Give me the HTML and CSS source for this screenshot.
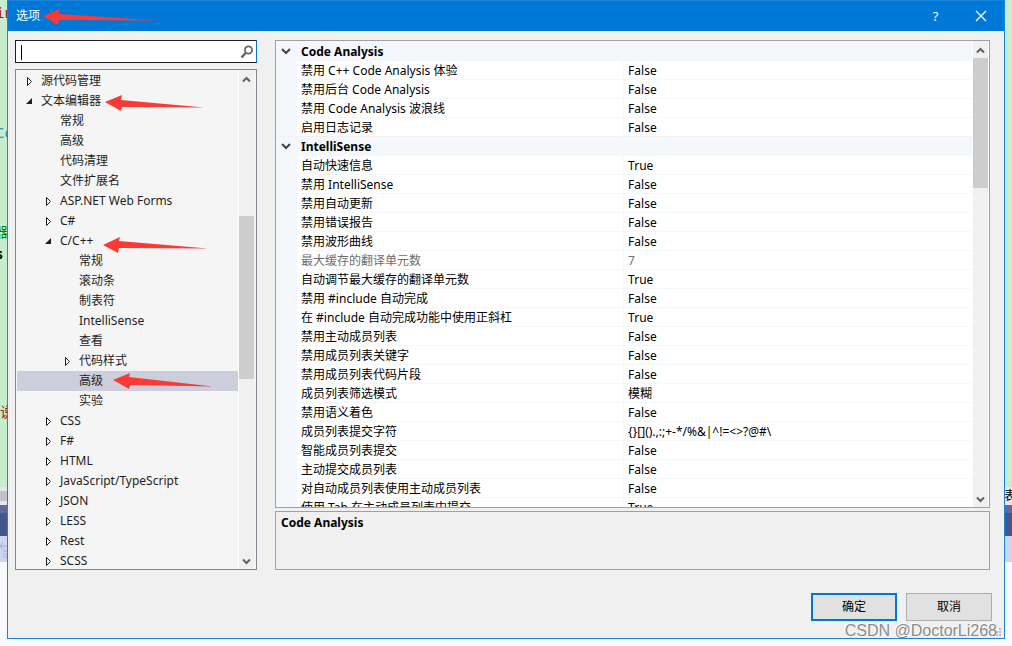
FILE: index.html
```html
<!DOCTYPE html>
<html lang="zh-CN">
<head>
<meta charset="utf-8">
<title>选项</title>
<link rel="stylesheet" href="styles.css">
</head>
<body>
<div class="backdrop" aria-hidden="true">
  <div class="editor">
    <span class="code code-red code-l1">in</span>
    <span class="code code-teal code-l2">Co</span>
    <span class="code code-green code-l3">器</span>
    <span class="code code-black code-l4">s</span>
    <span class="code code-red code-l5">说</span>
  </div>
  <div class="hscroll"><span class="hthumb"></span><span>表</span></div>
  <div class="band-top"></div>
  <div class="band"></div>
  <div class="toolbar">
    <svg width="8" height="26" viewBox="0 0 8 26"><path d="M0 10h7M3 7L0 10l3 3M3 15h5M3 18h5M3 21h5" fill="none" stroke="#a5acc5"/></svg>
  </div>
</div>

<main class="dialog" role="dialog" aria-labelledby="title">
  <header class="titlebar">
    <h1 id="title">选项</h1>
    <button class="caption" type="button" aria-label="帮助">?</button>
    <button class="caption" type="button" aria-label="关闭"><svg width="12" height="12" viewBox="0 0 12 12"><path d="M1 1l10 10M11 1L1 11" fill="none" stroke="#fff" stroke-width="1.2"/></svg></button>
  </header>

  <div class="content">
    <nav class="side">
      <div class="search">
        <input type="text" aria-label="搜索选项">
        <span class="caret"></span>
        <svg width="14" height="14" viewBox="0 0 14 14"><circle cx="8.5" cy="5" r="3.6" fill="none" stroke="#666" stroke-width="1.8"/><path d="M6 7.5L1.5 12.5" stroke="#666" stroke-width="2.6"/></svg>
      </div>
      <div class="tree">
        <ul class="nodes" id="nodes" role="tree"></ul>
        <div class="scrollbar">
          <svg class="arrow" width="9" height="7" viewBox="0 0 9 7"><path d="M1 5.5L4.5 2L8 5.5"/></svg>
          <div class="track tree-track"><div class="thumb tree-thumb"></div></div>
          <svg class="arrow" width="9" height="7" viewBox="0 0 9 7"><path d="M1 1.500L4.500 5L8 1.500"/></svg>
        </div>
      </div>
    </nav>

    <section class="detail">
      <div class="grid">
        <div class="viewport">
          <table>
            <colgroup><col class="c-gutter"><col class="c-name"><col class="c-value"></colgroup>
            <tbody id="props"></tbody>
          </table>
        </div>
        <div class="scrollbar">
          <svg class="arrow" width="9" height="7" viewBox="0 0 9 7"><path d="M1 5.500L4.500 2L8 5.500"/></svg>
          <div class="track"><div class="thumb grid-thumb"></div></div>
          <svg class="arrow" width="9" height="7" viewBox="0 0 9 7"><path d="M1 1.500L4.500 5L8 1.500"/></svg>
        </div>
      </div>
      <div class="description">Code Analysis</div>
    </section>
  </div>

  <footer class="actions">
    <button class="btn primary" type="button">确定</button>
    <button class="btn" type="button">取消</button>
  </footer>
  <svg class="grip" width="8" height="8" viewBox="0 0 8 8"><path d="M6 0h2v2H6zM3 3h2v2H3zM6 3h2v2H6zM0 6h2v2H0zM3 6h2v2H3zM6 6h2v2H6z" fill="#bbb"/></svg>
</main>

<svg class="marks" width="260" height="400" viewBox="0 0 260 400" aria-hidden="true">
  <g fill="#fb3a36">
    <path d="M43 16L60 9L59 14L157 20.500L59 20L58 25Z"/>
    <path d="M105 102L122 95L121 100L204 107.500L122 107L121 111Z"/>
    <path d="M103 245L120 237L119 241L208 248.500L119 248L118 253Z"/>
    <path d="M113 380L130 373L129 377L213 386.500L130 385L129 389Z"/>
  </g>
</svg>
<div class="watermark">CSDN @DoctorLi268</div>
<script src="options.js"></script>
</body>
</html>
```
FILE: styles.css
```css
* { box-sizing: border-box; }
body {
  margin: 0;
  height: 100vh;
  display: flex;
  position: relative;
  overflow: hidden;
  padding: 0 7px 7px;
  background: #f8f9ff;
  color: #1e1e1e;
  font: 12px/18px "Noto Sans", "Noto Sans CJK SC", sans-serif;
}
button, input { font: inherit; color: inherit; }

.backdrop { position: absolute; inset: 0; }
.editor { height: 487px; background: #c7edcc; position: relative; overflow: hidden; }
.code { position: absolute; left: 0; font: 14px/18px "DejaVu Sans Mono", "Noto Sans CJK SC", monospace; }
.code-l1 { top: 4px; left: -4px; }
.code-l2 { top: 124px; left: -4px; }
.code-l3 { top: 223px; left: -6px; }
.code-l4 { top: 245px; left: -5px; font-weight: bold; }
.code-l5 { top: 403px; left: 0; }
.code-red { color: #a31515; }
.code-teal { color: #2b91af; }
.code-green { color: #008000; }
.code-black { color: #000; }
.hscroll { display: flex; justify-content: space-between; height: 18px; background: #e6e7ee; color: #000; margin-right: -4px; }
.hthumb { width: 50%; height: 10px; margin-top: 4px; background: #c2c3c9; }
.band-top { height: 8px; background: #5d6b99; }
.band { height: 23px; background: #40568d; }
.toolbar { height: 26px; background: #ccd5f0; }

.dialog {
  flex: 1;
  min-width: 0;
  position: relative;
  display: flex;
  flex-direction: column;
  border: 1px solid #1883d7;
  border-top: 0;
  background: #f0f0f0;
}
.titlebar { display: flex; align-items: center; height: 31px; padding: 0 1px 0 8px; background: #0078d7; border-top: 1px solid #1883d7; color: #fff; flex: none; }
.titlebar h1 { flex: 1; margin: 0; font: inherit; }
.caption { width: 45px; height: 30px; border: 0; padding: 0; background: transparent; display: flex; align-items: center; justify-content: center; font-size: 13px; }

.content { flex: 1; min-height: 0; display: flex; gap: 18px; padding: 9px 14px 0 7px; }
.side { width: 242px; flex: none; display: flex; flex-direction: column; gap: 6px; }
.search { display: flex; align-items: center; height: 23px; position: relative; flex: none; background: #fff; border: 1px solid #1e1e1e; border-right-color: #0078d7; padding-right: 2px; }
.search input { flex: 1; min-width: 0; border: 0; outline: 0; background: transparent; padding: 0 5px; }
.caret { position: absolute; left: 5px; top: 4px; width: 1px; height: 15px; background: #000; }

.tree { flex: 1; min-height: 0; display: flex; border: 1px solid #828790; background: #f5f5f5; padding-right: 2px; }
.nodes { flex: 1; min-width: 0; overflow: hidden; list-style: none; margin: 0; padding: 1px 0 1px 1px; border-right: 1px solid #fff; }
.node { display: flex; align-items: center; gap: 6px; height: 20px; padding-left: 6px; white-space: nowrap; }
.level-1 { padding-left: 25px; }
.level-2 { padding-left: 44px; }
.node svg { width: 12px; height: 12px; flex: none; }
.selected { background: #cccedb; }

.scrollbar { width: 15px; flex: none; display: flex; flex-direction: column; align-items: center; background: #f0f0f0; }
.arrow { margin: 6px 0 4px; flex: none; }
.arrow path { fill: none; stroke: #606060; stroke-width: 2; }
.track { flex: 1; width: 100%; display: flex; flex-direction: column; }
.thumb { background: #cdcdcd; }
.tree-thumb { height: 35%; margin-top: 129px; }
.grid-thumb { height: 30%; }

.detail { flex: 1; min-width: 0; display: flex; flex-direction: column; gap: 3px; color: #000; }
.grid { flex: 1; min-height: 0; display: flex; border: 1px solid #a0a0a0; background: #fff; padding-right: 1px; }
.viewport { flex: 1; min-width: 0; overflow: hidden; padding: 1px 1px 0 0; background: linear-gradient(#f4f7fc, #f4f7fc) 0 0 / 100% 1px no-repeat; }
table { width: 100%; border-collapse: separate; border-spacing: 0; table-layout: fixed; }
.c-gutter { width: 21px; }
.c-name { width: 47%; }
td, th { height: 19px; padding: 2px 4px 0; line-height: 16px; border-bottom: 1px solid #f4f7fc; text-align: left; font-weight: normal; white-space: nowrap; overflow: hidden; }
.gutter, .category th { background: #f4f7fc; }
.gutter { padding: 0; }
.name { border-right: 1px solid #f4f7fc; }
.category th { font-weight: bold; }
.before-category td, .before-category th { border-bottom-color: #f0f0f0; }
.disabled { color: #6d6d6d; }
.fold { display: flex; align-items: center; justify-content: center; width: 19px; height: 18px; border: 0; padding: 0; background: transparent; }
.fold path { fill: none; stroke: #444; stroke-width: 2; }

.description { height: 59px; flex: none; border: 1px solid #a0a0a0; padding: 2px 5px; font-weight: bold; }
.actions { display: flex; justify-content: flex-end; gap: 9px; padding: 23px 12px 17px; flex: none; }
.btn { width: 86px; height: 28px; padding: 0; border: 1px solid #adadad; background: #e1e1e1; color: #000; }
.primary { border: 2px solid #0078d7; }
.grip { position: absolute; right: 3px; bottom: 2px; }

.marks { position: absolute; left: 0; top: 0; pointer-events: none; }
.watermark { position: absolute; right: 15px; bottom: 6px; font: 16px/18px "Liberation Sans", Arial, sans-serif; color: #8c8c8c; text-shadow: -1px -1px #fff; }
```
FILE: options.js
```js
const nodes = [
  [0, '源代码管理', 'closed'], [0, '文本编辑器', 'open'],
  [1, '常规'], [1, '高级'], [1, '代码清理'], [1, '文件扩展名'],
  [1, 'ASP.NET Web Forms', 'closed'], [1, 'C#', 'closed'], [1, 'C/C++', 'open'],
  [2, '常规'], [2, '滚动条'], [2, '制表符'], [2, 'IntelliSense'], [2, '查看'],
  [2, '代码样式', 'closed'], [2, '高级', 'selected'], [2, '实验'],
  [1, 'CSS', 'closed'], [1, 'F#', 'closed'], [1, 'HTML', 'closed'],
  [1, 'JavaScript/TypeScript', 'closed'], [1, 'JSON', 'closed'],
  [1, 'LESS', 'closed'], [1, 'Rest', 'closed'], [1, 'SCSS', 'closed']
];
const glyphs = {
  closed: '<path d="M4.500 2.500v8l4-4z" fill="#fff" stroke="#1e1e1e"/>',
  open: '<path d="M9 3v6H3z" fill="#1e1e1e"/>'
};
document.getElementById('nodes').innerHTML = nodes.map(([level, text, state]) =>
  `<li role="treeitem" class="node level-${level}${state === 'selected' ? ' selected' : ''}">` +
  `<svg viewBox="0 0 12 12">${glyphs[state] || ''}</svg><span>${text}</span></li>`).join('');

const props = [
  ['Code Analysis'],
  ['禁用 C++ Code Analysis 体验', 'False'], ['禁用后台 Code Analysis', 'False'],
  ['禁用 Code Analysis 波浪线', 'False'], ['启用日志记录', 'False'],
  ['IntelliSense'],
  ['自动快速信息', 'True'], ['禁用 IntelliSense', 'False'], ['禁用自动更新', 'False'],
  ['禁用错误报告', 'False'], ['禁用波形曲线', 'False'], ['最大缓存的翻译单元数', '7', 'disabled'],
  ['自动调节最大缓存的翻译单元数', 'True'], ['禁用 #include 自动完成', 'False'],
  ['在 #include 自动完成功能中使用正斜杠', 'True'], ['禁用主动成员列表', 'False'],
  ['禁用成员列表关键字', 'False'], ['禁用成员列表代码片段', 'False'],
  ['成员列表筛选模式', '模糊'], ['禁用语义着色', 'False'],
  ['成员列表提交字符', '{}[]().,:;+-*/%&amp;|^!=&lt;&gt;?@#\\'],
  ['智能成员列表提交', 'False'], ['主动提交成员列表', 'False'],
  ['对自动成员列表使用主动成员列表', 'False'], ['使用 Tab 在主动成员列表中提交', 'True']
];
const chevron = '<svg width="10" height="8" viewBox="0 0 10 8"><path d="M1 2l4 4 4-4"/></svg>';
document.getElementById('props').innerHTML = props.map(([name, value, state], i) => {
  if (value === undefined) {
    return `<tr class="category"><td class="gutter"><button class="fold" type="button" aria-label="${name}">${chevron}</button></td><th colspan="2" scope="rowgroup">${name}</th></tr>`;
  }
  const last = props[i + 1] && props[i + 1].length === 1;
  return `<tr class="${state || ''}${last ? ' before-category' : ''}"><td class="gutter"></td><th class="name" scope="row">${name}</th><td>${value}</td></tr>`;
}).join('');
```
